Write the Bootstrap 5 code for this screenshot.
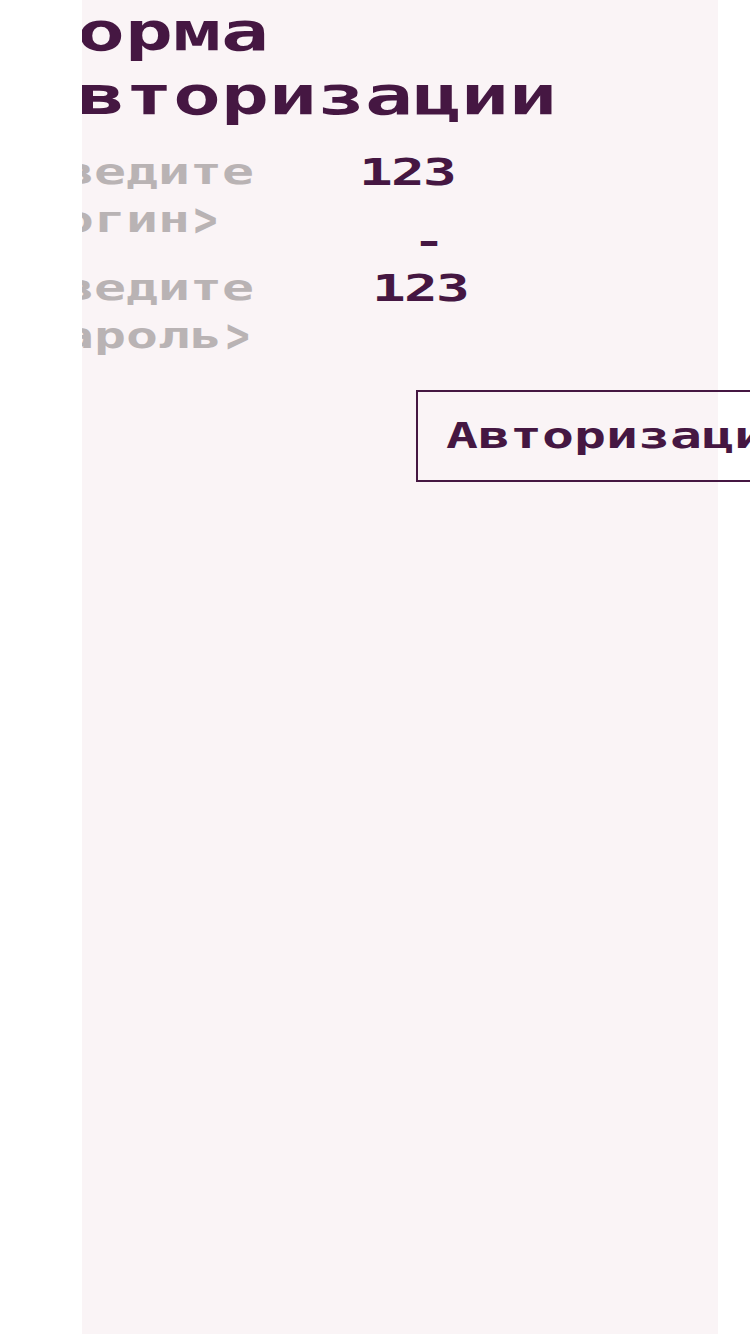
<!DOCTYPE html>
<html lang="ru">
<head>
<meta charset="utf-8">
<meta name="viewport" content="width=device-width, initial-scale=1">
<title>Форма авторизации</title>
<link href="https://cdn.jsdelivr.net/npm/bootstrap@5.3.0/dist/css/bootstrap.min.css" rel="stylesheet">
<style>
  :root { --ink: #451742; --muted: #b9b3b4; --panel: #faf4f6; }
  body { font-family: "DejaVu Sans Mono", monospace; font-weight: 700; color: var(--ink); background: #fff; }
  .auth-panel { width: 636px; margin-left: 82px; background: var(--panel); clip-path: inset(0 -32px 0 0); }
  .auth-content { width: 800px; margin-left: -50px; }
  .wide { display: block; white-space: nowrap; transform: scaleX(1.4766); transform-origin: 0 0; }
  .auth-title { font-size: 54px; line-height: 64px; font-weight: 700; margin: 0 0 20px -3px; }
  .auth-row { font-size: 36px; line-height: 48px; height: 116px; }
  .auth-label { width: 329px; margin-left: -2px; color: var(--muted); }
  .chevron { display: inline-block; transform: scale(.74, 1.35); line-height: 1; }
  .auth-value { font-size: 38px; letter-spacing: -1.2px; }
  .auth-value.shifted { margin-left: 13px; }
  .dash { font-size: 36px; line-height: 48px; margin: 22px 0 0 54px; }
  .auth-btn { width: 416px; height: 92px; margin: 10px 0 0 384px; padding: 19px 28px; border: 2px solid var(--ink);
    border-radius: 0; color: var(--ink); font-size: 36px; line-height: 48px; font-weight: 700; text-align: left; }
</style>
</head>
<body class="overflow-hidden m-0">
<main class="auth-panel vh-100">
  <form class="auth-content">
    <h1 class="auth-title"><span class="wide">Форма<br>Авторизации</span></h1>
    <div class="auth-row d-flex">
      <label class="auth-label flex-shrink-0"><span class="wide">Введите<br>логин<span class="chevron">&gt;</span></span></label>
      <div>
        <span class="wide auth-value">123</span>
        <span class="wide dash">-</span>
      </div>
    </div>
    <div class="auth-row d-flex">
      <label class="auth-label flex-shrink-0"><span class="wide">Введите<br>пароль<span class="chevron">&gt;</span></span></label>
      <div><span class="wide auth-value shifted">123</span></div>
    </div>
    <button type="button" class="btn auth-btn"><span class="wide">Авторизации</span></button>
  </form>
</main>
<script src="https://cdn.jsdelivr.net/npm/bootstrap@5.3.0/dist/js/bootstrap.bundle.min.js"></script>
</body>
</html>
